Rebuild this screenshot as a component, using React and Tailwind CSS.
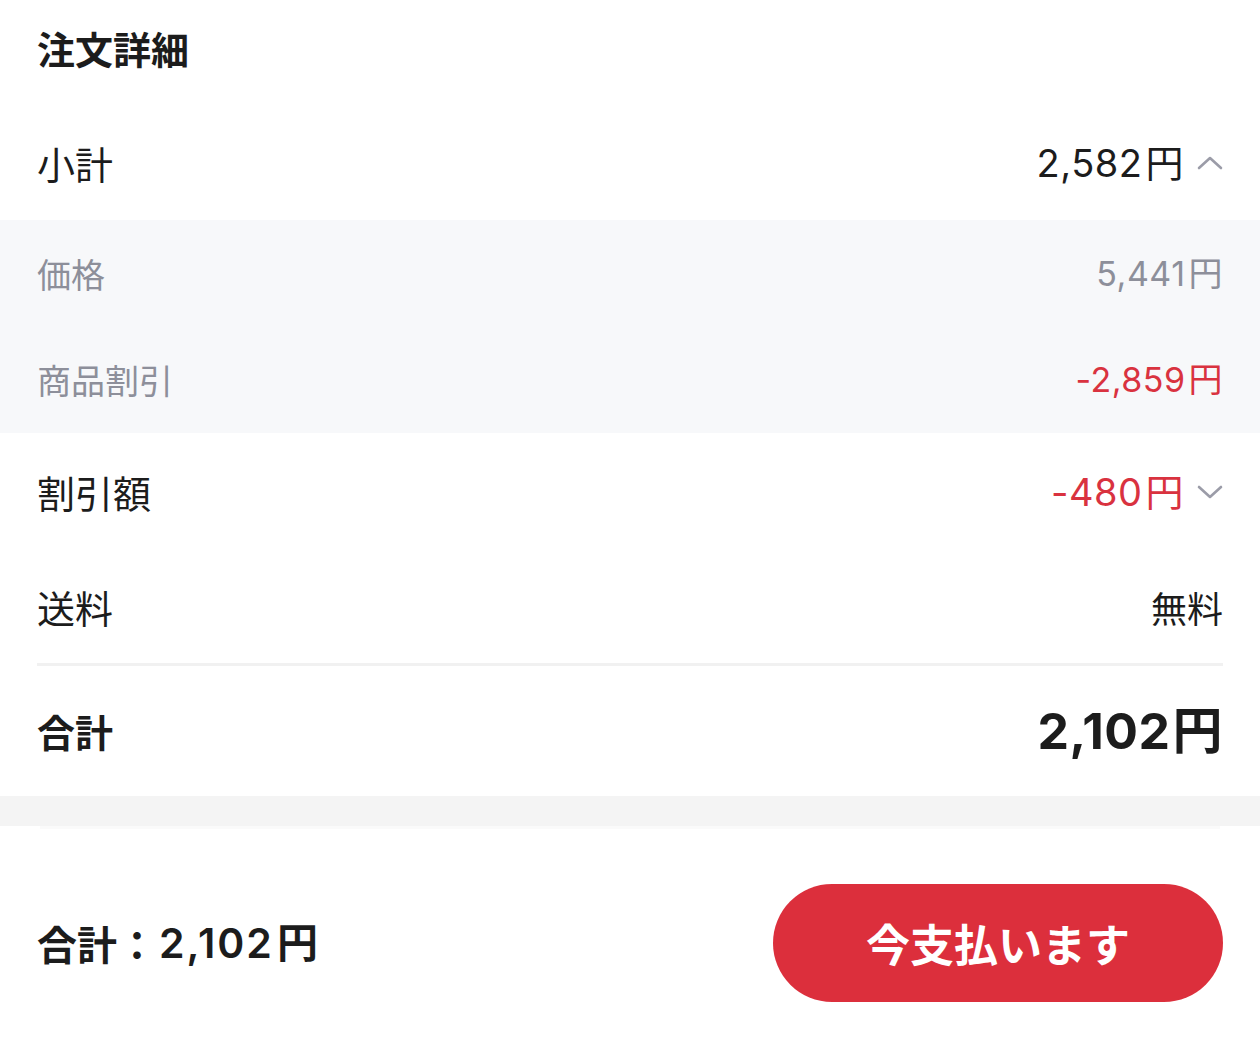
import React from 'react';

const font = { fontFamily: '"Noto Sans CJK JP", "Noto Sans", sans-serif' };
const num = 'font-["Inter","Noto_Sans_CJK_JP",sans-serif] tracking-[0.5px]';

const Chevron = ({ up }) => (
  <svg width="26" height="16" viewBox="0 0 26 16" fill="none" className="ml-[13px]">
    <polyline
      points={up ? '2,13 13,3 24,13' : '2,3 13,13 24,3'}
      stroke="#9b9ca8"
      strokeWidth="2.6"
      strokeLinecap="round"
      strokeLinejoin="round"
    />
  </svg>
);

export default function App() {
  return (
    <div className="w-[1260px] h-[1063px] bg-white text-[#1c1c1c] flex flex-col" style={font}>
      <div className="h-[96px] flex items-center px-[37px]">
        <h1 className="text-[38px] font-bold leading-none">注文詳細</h1>
      </div>

      <div className="h-[124px] pt-[10px] flex items-center justify-between px-[37px]">
        <span className="text-[38px] leading-none">小計</span>
        <span className={`flex items-center text-[38px] leading-none ${num}`}>
          2,582<span className="ml-[3px]">円</span>
          <Chevron up />
        </span>
      </div>

      <div className="bg-[#f7f8fa] text-[#8d8f9a]">
        <div className="h-[107px] flex items-center justify-between px-[37px]">
          <span className="text-[34px] leading-none">価格</span>
          <span className={`text-[34px] leading-none ${num}`}>5,441<span className="ml-[3px]">円</span></span>
        </div>
        <div className="h-[106px] flex items-center justify-between px-[37px]">
          <span className="text-[34px] leading-none">商品割引</span>
          <span className={`text-[34px] leading-none text-[#d9323f] ${num}`}>-2,859<span className="ml-[3px]">円</span></span>
        </div>
      </div>

      <div className="h-[118px] flex items-center justify-between px-[37px]">
        <span className="text-[38px] leading-none">割引額</span>
        <span className={`flex items-center text-[38px] leading-none text-[#d9323f] ${num}`}>
          -480<span className="ml-[3px]">円</span>
          <Chevron />
        </span>
      </div>

      <div className="h-[112px] flex items-center justify-between px-[37px]">
        <span className="text-[38px] leading-none">送料</span>
        <span className="text-[36px] leading-none">無料</span>
      </div>

      <div className="mx-[37px] h-[3px] bg-[#f1f1f1]" />

      <div className="h-[130px] flex items-center justify-between px-[37px]">
        <span className="text-[38px] font-bold leading-none">合計</span>
        <span className={`text-[50px] font-bold leading-none ${num}`}>2,102<span className="ml-[2px]">円</span></span>
      </div>

      <div className="h-[30px] bg-[#f4f4f4]" />
      <div className="mx-[40px] h-[3px] bg-[#fafafa]" />

      <div className="flex-1 flex items-center justify-between px-[37px] pb-[6px]">
        <span className="flex items-center leading-none">
          <span className="font-bold text-[40px]">合計：</span>
          <span className={`font-semibold text-[41px] tracking-[2px] ml-[2px] ${num}`}>2,102<span className="ml-[3px]">円</span></span>
        </span>
        <button className="w-[450px] h-[118px] rounded-full bg-[#dc2f3c] text-white text-[44px] font-bold leading-none">
          今支払います
        </button>
      </div>
    </div>
  );
}
